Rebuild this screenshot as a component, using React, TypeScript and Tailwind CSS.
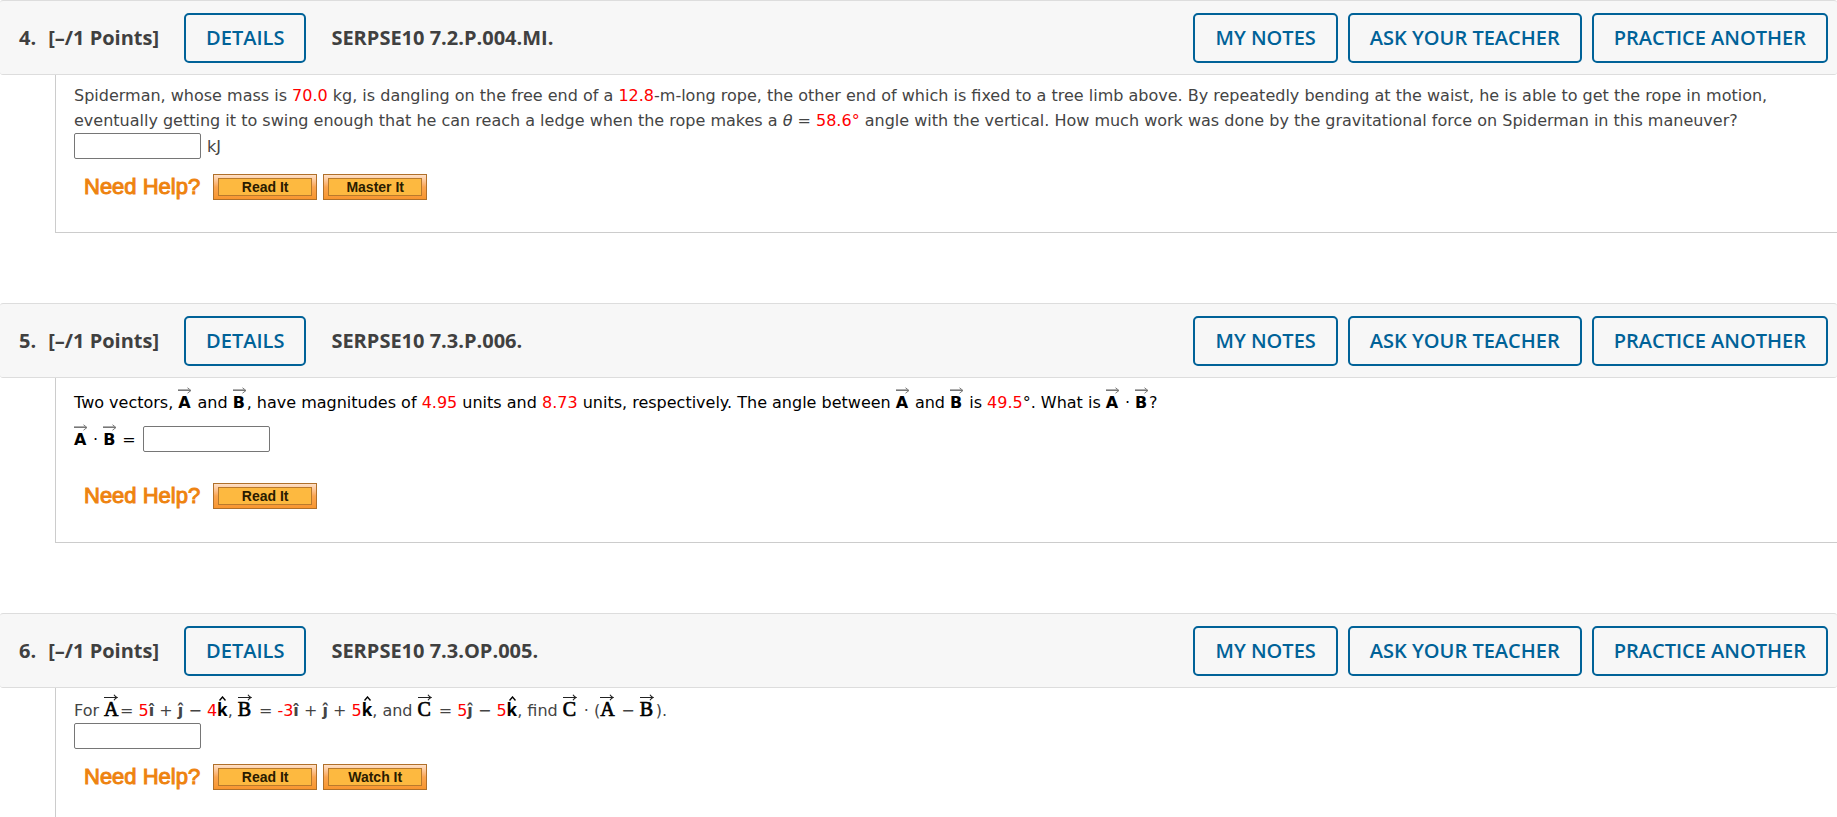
import type { ReactNode } from "react";

const TOOLBAR = ["MY NOTES", "ASK YOUR TEACHER", "PRACTICE ANOTHER"];

const outline =
  "h-[50px] rounded-[5px] border-2 border-[#006298] px-[20px] text-[20px] font-semibold leading-6 text-[#006298]";

function Red({ children }: { children: ReactNode }) {
  return <span className="text-[#ff0000]">{children}</span>;
}

function Arrow({ bold = false }: { bold?: boolean }) {
  return (
    <svg
      viewBox="0 0 14 7"
      className={
        bold
          ? "absolute -top-[5px] left-0 h-[7px] w-[14px] text-[#222222]"
          : "absolute -top-[6px] left-0 h-[7px] w-[14px] text-[#777777]"
      }
      fill="none"
      stroke="currentColor"
      aria-hidden="true"
    >
      {bold ? (
        <path d="M0 3.5H13M10 0.8Q11.2 2.8 13 3.5Q11.2 4.2 10 6.2" strokeWidth="1.2" />
      ) : (
        <>
          <path d="M0 2.5H11" strokeWidth="1" opacity="0.6" />
          <path d="M0 3.5H13M9.5 0.8L13 3.5L9.5 6.2" strokeWidth="1" />
        </>
      )}
    </svg>
  );
}

function Vec({ children }: { children: ReactNode }) {
  return (
    <b className="relative inline-block min-w-[14px] leading-[20px] text-black">
      <Arrow />
      {children}
    </b>
  );
}

function SerifVec({ children }: { children: ReactNode }) {
  return (
    <span className="relative inline-block min-w-[16px] font-['Liberation_Serif',serif] text-[20px] leading-[20px] text-black [-webkit-text-stroke:0.7px_black]">
      <Arrow bold />
      {children}
    </span>
  );
}

function KHat() {
  return (
    <b className="relative inline-block font-['Open_Sans',sans-serif] text-[17px] leading-[20px] text-black">
      <svg
        viewBox="0 0 7 5"
        className="absolute -top-[4px] left-[2px] h-[5px] w-[7px]"
        fill="none"
        stroke="currentColor"
        strokeWidth="1.4"
        aria-hidden="true"
      >
        <path d="M0.5 4.5L3.5 1L6.5 4.5" />
      </svg>
      k
    </b>
  );
}

function Answer({ label }: { label: string }) {
  return (
    <input
      type="text"
      aria-label={label}
      className="h-[26px] w-[127px] rounded-[2px] border border-[#767676] bg-white px-1"
    />
  );
}

function Help({ items }: { items: string[] }) {
  return (
    <div className="flex items-center gap-[6px] pl-[10px] font-['Liberation_Sans',sans-serif]">
      <span className="mr-[7px] text-[22px] leading-[26px] text-[#ee8310] [-webkit-text-stroke:1px_#ee8310]">
        Need Help?
      </span>
      {items.map((item) => (
        <button
          key={item}
          type="button"
          className="h-[26px] w-[104px] border border-[#b0702a] bg-linear-to-b from-[#fde0c8] via-[#fba550] to-[#f8962e] p-[3px_4px]"
        >
          <span className="flex h-full items-center justify-center border border-[#b97a2c] bg-[#fdb940] text-[14px] font-bold leading-none text-[#2a1c00]">
            {item}
          </span>
        </button>
      ))}
    </div>
  );
}

function Question({ num, code, children }: { num: number; code: string; children: ReactNode }) {
  return (
    <section className="mb-[70px]">
      <header className="flex h-[75px] items-center rounded-[3px] border-y border-[#dddddd] bg-[#f7f7f7] pl-[19px] pr-[9px] font-['Open_Sans',sans-serif]">
        <h2 className="flex items-center text-[20px] font-bold text-[#404040]">
          <span className="mr-[12px]">{num}.</span>
          <span>[–/1 Points]</span>
        </h2>
        <button type="button" className={`${outline} ml-[25px]`}>
          DETAILS
        </button>
        <span className="ml-[25px] text-[20px] font-bold text-[#404040]">{code}</span>
        <div className="ml-auto flex gap-[10px]">
          {TOOLBAR.map((t) => (
            <button key={t} type="button" className={outline}>
              {t}
            </button>
          ))}
        </div>
      </header>
      {children}
    </section>
  );
}

const panel =
  "ml-[55px] border-b border-l border-[#cccccc] pl-[18px] pr-[18px] font-['DejaVu_Sans',sans-serif] text-[16px] leading-[25px]";

export default function App() {
  return (
    <main className="h-screen overflow-hidden bg-white">
      <Question num={4} code="SERPSE10 7.2.P.004.MI.">
        <div className={`${panel} pb-[32px] pt-[8px] text-[#444444]`}>
          <p>
            Spiderman, whose mass is <Red>70.0</Red> kg, is dangling on the free end of a <Red>12.8</Red>-m-long rope,
            the other end of which is fixed to a tree limb above. By repeatedly bending at the waist, he is able to get
            the rope in motion, eventually getting it to swing enough that he can reach a ledge when the rope makes a{" "}
            <i>θ</i> = <Red>58.6°</Red> angle with the vertical. How much work was done by the gravitational force on
            Spiderman in this maneuver?
          </p>
          <div className="mb-[15px] flex items-center gap-[6px]">
            <Answer label="Work in kilojoules" />
            <span>kJ</span>
          </div>
          <Help items={["Read It", "Master It"]} />
        </div>
      </Question>

      <Question num={5} code="SERPSE10 7.3.P.006.">
        <div className={`${panel} pb-[33px] pt-[12px] text-black`}>
          <p>
            Two vectors, <Vec>A</Vec> and <Vec>B</Vec>, have magnitudes of <Red>4.95</Red> units and <Red>8.73</Red>{" "}
            units, respectively. The angle between <Vec>A</Vec> and <Vec>B</Vec> is <Red>49.5</Red>°. What is{" "}
            <Vec>A</Vec> · <Vec>B</Vec>?
          </p>
          <p className="mb-[31px] mt-[11px] flex items-center gap-[7px]">
            <span>
              <Vec>A</Vec> · <Vec>B</Vec> =
            </span>
            <Answer label="Dot product of A and B" />
          </p>
          <Help items={["Read It"]} />
        </div>
      </Question>

      <Question num={6} code="SERPSE10 7.3.OP.005.">
        <div className={`${panel} pb-[60px] pt-[10px] text-[#444444]`}>
          <p>
            For <SerifVec>A</SerifVec>= <Red>5</Red>
            <b>î</b> + <b>ĵ</b> − <Red>4</Red>
            <KHat />, <SerifVec>B</SerifVec> = <Red>-3</Red>
            <b>î</b> + <b>ĵ</b> + <Red>5</Red>
            <KHat />, and <SerifVec>C</SerifVec> = <Red>5</Red>
            <b>ĵ</b> − <Red>5</Red>
            <KHat />, find <SerifVec>C</SerifVec> · (<SerifVec>A</SerifVec> − <SerifVec>B</SerifVec>).
          </p>
          <div className="mb-[15px] flex">
            <Answer label="Value of the expression" />
          </div>
          <Help items={["Read It", "Watch It"]} />
        </div>
      </Question>
    </main>
  );
}
